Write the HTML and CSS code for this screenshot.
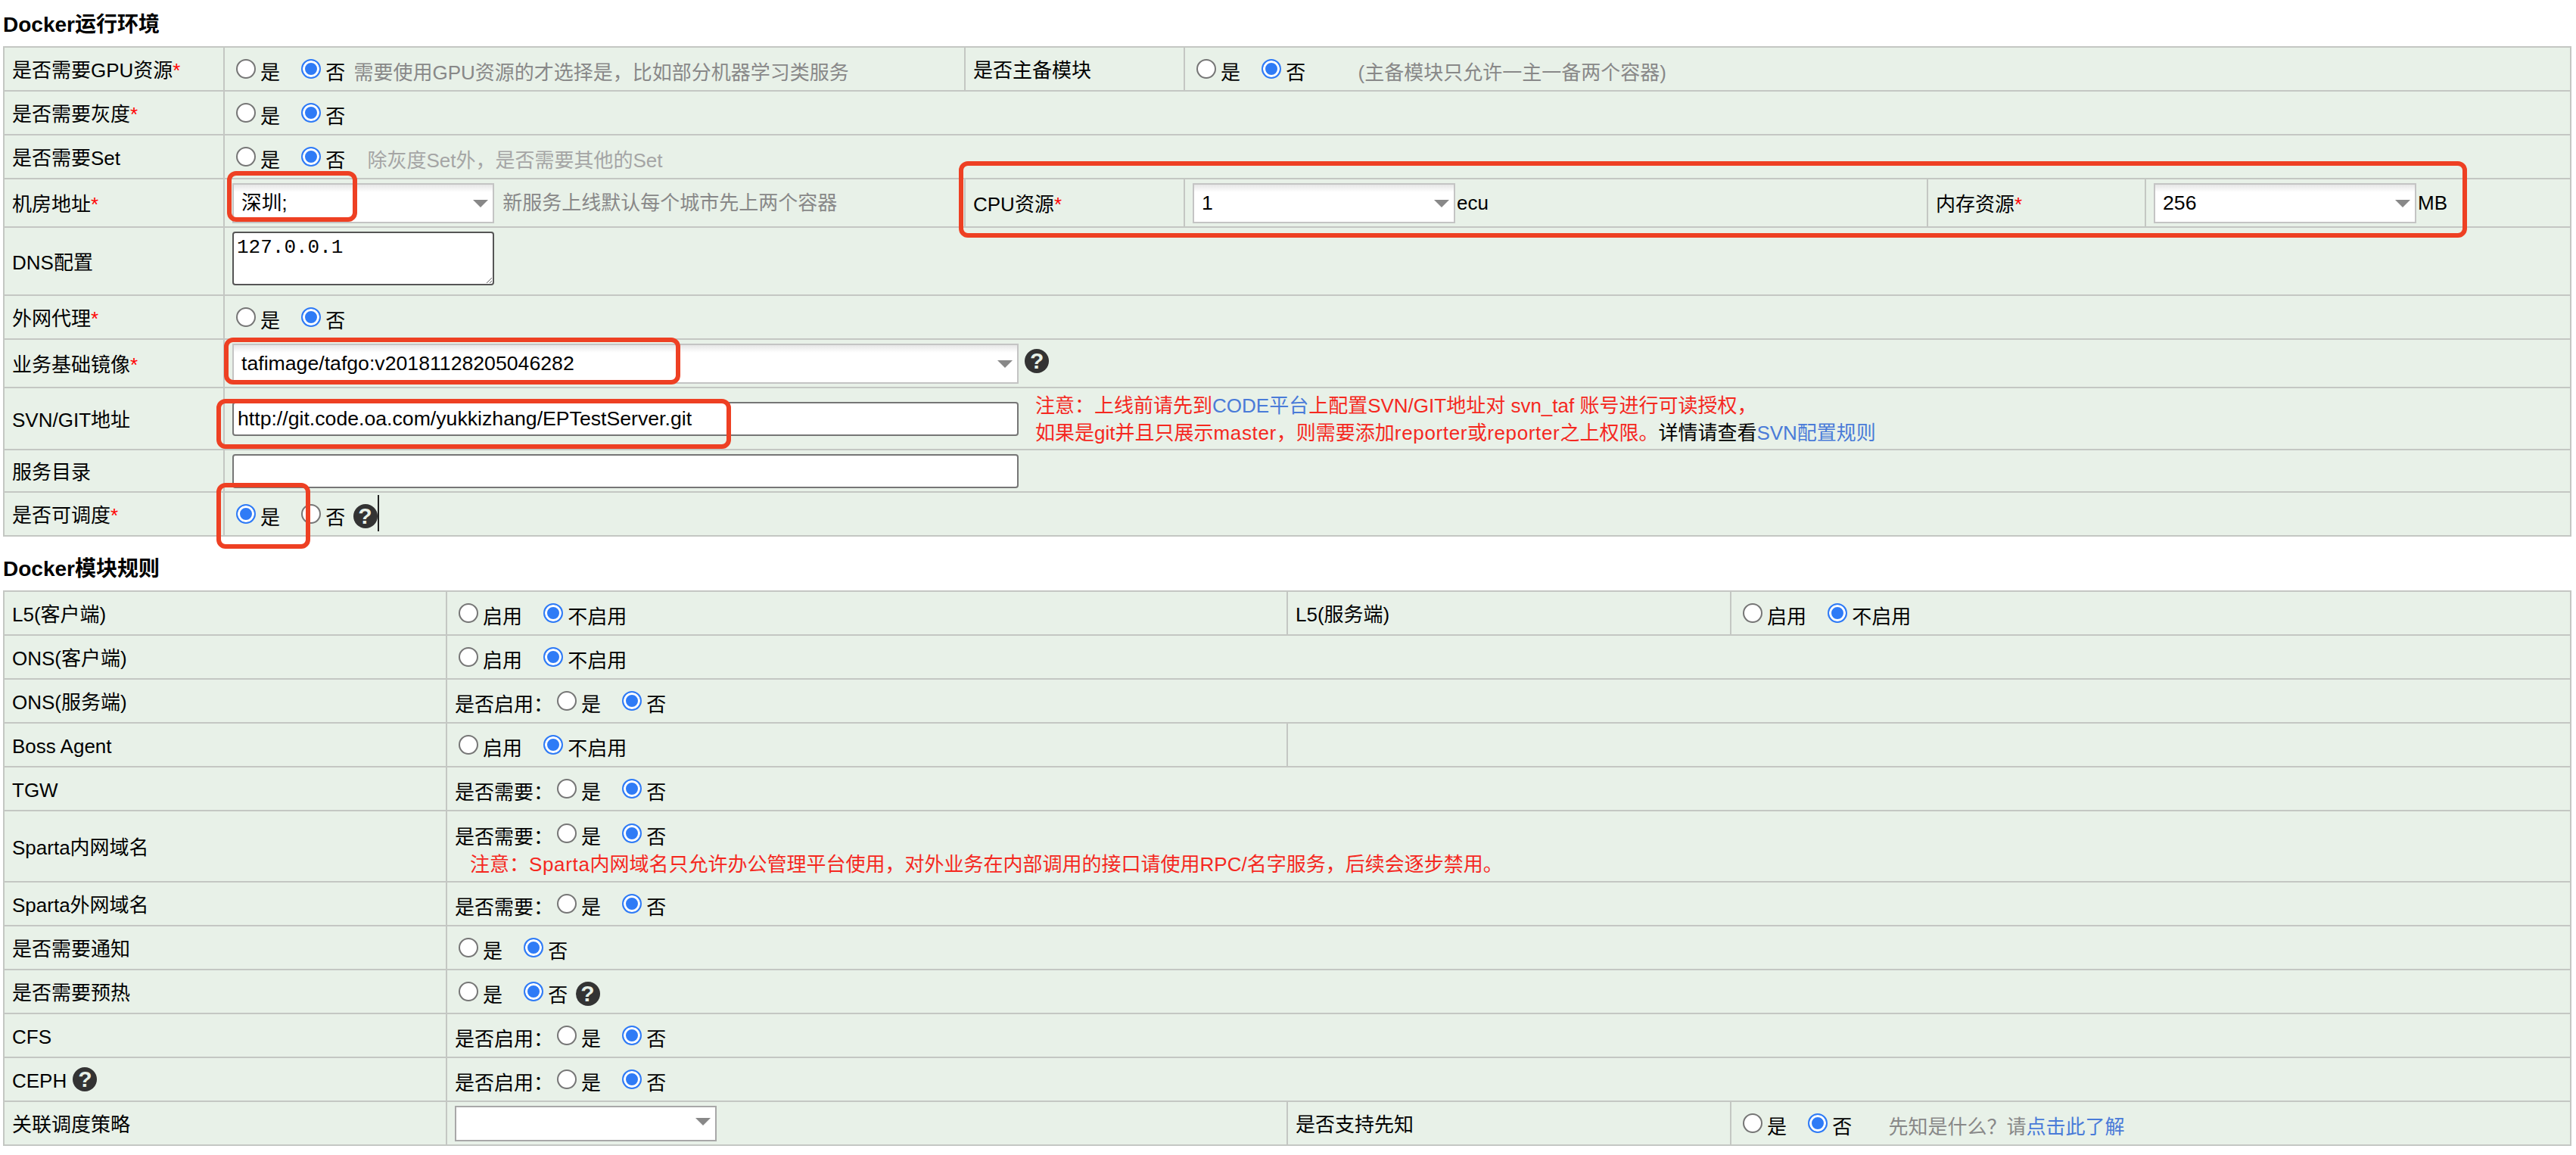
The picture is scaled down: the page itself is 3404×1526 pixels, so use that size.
FILE: index.html
```html
<!DOCTYPE html>
<html lang="zh-CN">
<head>
    <meta charset="UTF-8">
    <title>Docker配置</title>
    <link rel="stylesheet" href="styles.css">
</head>
<body>

    <!-- Docker运行环境 -->
    <h4 class="title">Docker运行环境</h4>
    <table class="form-table env-table">
        <colgroup>
            <col class="env-c1"><col class="env-c2"><col class="env-c3"><col class="env-c4"><col class="env-c5"><col class="env-c6">
        </colgroup>
        <tr>
            <td>是否需要GPU资源<em class="req">*</em></td>
            <td class="opt">
                <input class="radio" type="radio" name="gpu"><label>是</label>
                <input class="radio" type="radio" name="gpu" checked><label class="last">否</label>
                <span class="hint">需要使用GPU资源的才选择是，比如部分机器学习类服务</span>
            </td>
            <td>是否主备模块</td>
            <td class="opt" colspan="3">
                <input class="radio" type="radio" name="master"><label>是</label>
                <input class="radio" type="radio" name="master" checked><label class="last">否</label>
                <span class="hint far">(主备模块只允许一主一备两个容器)</span>
            </td>
        </tr>
        <tr>
            <td>是否需要灰度<em class="req">*</em></td>
            <td class="opt" colspan="5">
                <input class="radio" type="radio" name="gray"><label>是</label>
                <input class="radio" type="radio" name="gray" checked><label class="last">否</label>
            </td>
        </tr>
        <tr>
            <td>是否需要Set</td>
            <td class="opt" colspan="5">
                <input class="radio" type="radio" name="set"><label>是</label>
                <input class="radio" type="radio" name="set" checked><label class="last">否</label>
                <span class="hint light">除灰度Set外，是否需要其他的Set</span>
            </td>
        </tr>
        <tr class="row-select">
            <td>机房地址<em class="req">*</em></td>
            <td class="ctl">
                <span class="dropdown w-city"><select><option>深圳;</option></select></span>
                <span class="hint">新服务上线默认每个城市先上两个容器</span>
            </td>
            <td>CPU资源<em class="req">*</em></td>
            <td class="ctl">
                <span class="dropdown w-small"><select><option>1</option></select></span><span class="unit">ecu</span>
            </td>
            <td>内存资源<em class="req">*</em></td>
            <td class="ctl">
                <span class="dropdown w-small"><select><option>256</option></select></span><span class="unit">MB</span>
            </td>
        </tr>
        <tr class="row-dns">
            <td>DNS配置</td>
            <td class="ctl" colspan="5"><textarea class="dns">127.0.0.1</textarea></td>
        </tr>
        <tr>
            <td>外网代理<em class="req">*</em></td>
            <td class="opt" colspan="5">
                <input class="radio" type="radio" name="proxy"><label>是</label>
                <input class="radio" type="radio" name="proxy" checked><label class="last">否</label>
            </td>
        </tr>
        <tr class="row-select">
            <td>业务基础镜像<em class="req">*</em></td>
            <td class="ctl" colspan="5">
                <span class="dropdown w-wide"><select><option>tafimage/tafgo:v20181128205046282</option></select></span>
                <span class="help">?</span>
            </td>
        </tr>
        <tr class="row-svn">
            <td>SVN/GIT地址</td>
            <td class="ctl" colspan="5">
                <div class="svn-line">
                    <input class="text-input" type="text" value="http://git.code.oa.com/yukkizhang/EPTestServer.git">
                    <p class="note">注意：上线前请先到<a href="#">CODE平台</a>上配置SVN/GIT地址对 svn_taf 账号进行可读授权，<br>如果是git并且只展示<span class="lat">master</span>，则需要添加<span class="lat">reporter</span>或<span class="lat">reporter</span>之上权限。<span class="plain">详情请查看</span><a href="#">SVN配置规则</a></p>
                </div>
            </td>
        </tr>
        <tr class="row-dir">
            <td>服务目录</td>
            <td class="ctl" colspan="5"><input class="text-input" type="text"></td>
        </tr>
        <tr>
            <td>是否可调度<em class="req">*</em></td>
            <td class="opt" colspan="5">
                <input class="radio" type="radio" name="sched" checked><label>是</label>
                <input class="radio" type="radio" name="sched"><label class="last">否</label>
                <span class="help gap">?</span><span class="caret"></span>
            </td>
        </tr>
    </table>

    <!-- Docker模块规则 -->
    <h4 class="title second">Docker模块规则</h4>
    <table class="form-table rule-table">
        <colgroup>
            <col class="rule-c1"><col class="rule-c2"><col class="rule-c3"><col class="rule-c4">
        </colgroup>
        <tr>
            <td>L5(客户端)</td>
            <td class="opt">
                <input class="radio" type="radio" name="l5c"><label>启用</label>
                <input class="radio" type="radio" name="l5c" checked><label>不启用</label>
            </td>
            <td>L5(服务端)</td>
            <td class="opt">
                <input class="radio" type="radio" name="l5s"><label>启用</label>
                <input class="radio" type="radio" name="l5s" checked><label>不启用</label>
            </td>
        </tr>
        <tr>
            <td>ONS(客户端)</td>
            <td class="opt" colspan="3">
                <input class="radio" type="radio" name="onsc"><label>启用</label>
                <input class="radio" type="radio" name="onsc" checked><label>不启用</label>
            </td>
        </tr>
        <tr>
            <td>ONS(服务端)</td>
            <td class="opt" colspan="3">是否启用：<input class="radio" type="radio" name="onss"><label>是</label>
                <input class="radio" type="radio" name="onss" checked><label>否</label>
            </td>
        </tr>
        <tr>
            <td>Boss Agent</td>
            <td class="opt">
                <input class="radio" type="radio" name="boss"><label>启用</label>
                <input class="radio" type="radio" name="boss" checked><label>不启用</label>
            </td>
            <td colspan="2"></td>
        </tr>
        <tr>
            <td>TGW</td>
            <td class="opt" colspan="3">是否需要：<input class="radio" type="radio" name="tgw"><label>是</label>
                <input class="radio" type="radio" name="tgw" checked><label>否</label>
            </td>
        </tr>
        <tr class="row-sparta">
            <td>Sparta内网域名</td>
            <td class="ctl" colspan="3">
                <div class="sparta-line">是否需要：<input class="radio" type="radio" name="spi"><label>是</label>
                    <input class="radio" type="radio" name="spi" checked><label>否</label>
                </div>
                <p class="note sparta-note">注意：<span class="lat">Sparta</span>内网域名只允许办公管理平台使用，对外业务在内部调用的接口请使用RPC/名字服务，后续会逐步禁用。</p>
            </td>
        </tr>
        <tr>
            <td>Sparta外网域名</td>
            <td class="opt" colspan="3">是否需要：<input class="radio" type="radio" name="spo"><label>是</label>
                <input class="radio" type="radio" name="spo" checked><label>否</label>
            </td>
        </tr>
        <tr>
            <td>是否需要通知</td>
            <td class="opt" colspan="3">
                <input class="radio" type="radio" name="notice"><label>是</label>
                <input class="radio" type="radio" name="notice" checked><label>否</label>
            </td>
        </tr>
        <tr>
            <td>是否需要预热</td>
            <td class="opt" colspan="3">
                <input class="radio" type="radio" name="warm"><label>是</label>
                <input class="radio" type="radio" name="warm" checked><label class="last">否</label>
                <span class="help gap">?</span>
            </td>
        </tr>
        <tr>
            <td>CFS</td>
            <td class="opt" colspan="3">是否启用：<input class="radio" type="radio" name="cfs"><label>是</label>
                <input class="radio" type="radio" name="cfs" checked><label>否</label>
            </td>
        </tr>
        <tr>
            <td>CEPH <span class="help">?</span></td>
            <td class="opt" colspan="3">是否启用：<input class="radio" type="radio" name="ceph"><label>是</label>
                <input class="radio" type="radio" name="ceph" checked><label>否</label>
            </td>
        </tr>
        <tr>
            <td>关联调度策略</td>
            <td class="ctl"><span class="dropdown w-city flat"><select><option></option></select></span></td>
            <td>是否支持先知</td>
            <td class="opt">
                <input class="radio" type="radio" name="know"><label>是</label>
                <input class="radio" type="radio" name="know" checked><label class="last">否</label>
                <span class="hint near">先知是什么？请<a href="#">点击此了解</a></span>
            </td>
        </tr>
    </table>

    <!-- 红框标注 -->
    <div class="mark mark-city"></div>
    <div class="mark mark-cpu"></div>
    <div class="mark mark-image"></div>
    <div class="mark mark-svn"></div>
    <div class="mark mark-sched"></div>

</body>
</html>
```

FILE: styles.css
```css
body {
    margin: 0;
    padding: 0 7px 0 4px;
    background: #fff;
    color: #000;
    font-family: "Liberation Sans", "Noto Sans CJK SC", sans-serif;
    font-size: 26px;
}

/* Section titles */
.title {
    margin: 0;
    height: 61px;
    padding-top: 16px;
    box-sizing: border-box;
    font-size: 28px;
    line-height: 34px;
    font-weight: bold;
}

.title.second {
    height: 71px;
    padding-top: 26px;
}

/* Tables */
.form-table {
    width: 3392px;
    table-layout: fixed;
    border-collapse: collapse;
    background: #e8f1e8;
}

.form-table td {
    height: 58px;
    padding: 4px 10px 0;
    border: 2px solid #c4c7c3;
    box-sizing: border-box;
    line-height: 34px;
    white-space: nowrap;
}

/* cells holding radios sit a little lower, cells holding fields don't */
.form-table td.opt { padding-top: 8px; }
.form-table td.ctl { padding-top: 0; }

.env-c1 { width: 291px; }
.env-c2 { width: 979px; }
.env-c3 { width: 290px; }
.env-c4 { width: 982px; }
.env-c5 { width: 288px; }
.env-c6 { width: 562px; }

.rule-c1 { width: 585px; }
.rule-c2 { width: 1111px; }
.rule-c3 { width: 586px; }
.rule-c4 { width: 1110px; }

.form-table .row-select td { height: 64px; }
.form-table .row-dns td { height: 90px; }
.form-table .row-svn td { height: 82px; }
.form-table .row-dir td { height: 56px; }
.form-table .row-sparta td { height: 94px; }

.req {
    color: #f00;
    font-style: normal;
}

/* Radios */
.radio {
    appearance: none;
    display: inline-block;
    width: 26px;
    height: 26px;
    margin: 0 6px 0 5px;
    border: 2px solid #767676;
    border-radius: 50%;
    background: #fff;
    box-sizing: border-box;
    vertical-align: 1px;
}

.radio:checked {
    border: 2px solid #2f7bf6;
    background: #2f7bf6;
    box-shadow: inset 0 0 0 3px #fff;
}

label {
    margin-right: 16px;
}

label.last {
    margin-right: 0;
}

/* Grey helper text */
.hint {
    margin-left: 4px;
    color: #888;
}

.ctl .hint, .unit {
    position: relative;
    top: 2px;
}

.hint.light {
    margin-left: 22px;
    color: #a5a5a5;
}

.hint.far {
    margin-left: 62px;
}

.hint.near {
    margin-left: 41px;
}

.hint a, .note a {
    color: #4a7bd8;
    text-decoration: none;
}

/* Fake select arrow sits on a real select */
.dropdown {
    position: relative;
    display: inline-block;
    vertical-align: middle;
}

.dropdown::after {
    content: "";
    position: absolute;
    top: 22px;
    right: 8px;
    border-top: 10px solid #888;
    border-left: 10px solid transparent;
    border-right: 10px solid transparent;
}

.dropdown select {
    appearance: none;
    display: block;
    width: 100%;
    height: 53px;
    padding: 0 10px;
    border: 2px solid #c4c4c4;
    border-radius: 0;
    background: linear-gradient(#e6e6e6, #fff 10px);
    font: inherit;
    font-size: 26.667px;
    color: #000;
}

.w-city { width: 346px; }
.w-small { width: 347px; }
.w-wide { width: 1039px; }

.flat select {
    height: 47px;
    border-color: #a8a8a8;
    background: #fff;
}

.flat::after {
    top: 16px;
}

.unit {
    margin-left: 2px;
}

/* Text fields */
.text-input {
    display: block;
    width: 1039px;
    height: 45px;
    padding: 0 5px;
    border: 2px solid #767676;
    border-radius: 4px;
    box-sizing: border-box;
    background: #fff;
    font: inherit;
    font-size: 26.667px;
    color: #000;
}

.dns {
    display: block;
    width: 346px;
    height: 71px;
    margin-bottom: 8px;
    padding: 4px 4px;
    border: 2px solid #555;
    border-radius: 4px;
    box-sizing: border-box;
    font-family: "Liberation Mono", monospace;
    font-size: 26px;
    line-height: 30px;
}

.svn-line {
    display: flex;
    align-items: center;
    gap: 22px;
}

.note {
    margin: 1px 0 0;
    color: #f5281f;
    line-height: 36px;
}

.note .plain {
    color: #000;
}

/* lowercase latin runs a bit wider in these notes */
.lat {
    letter-spacing: 0.65px;
}

.sparta-line {
    height: 46px;
    padding-top: 6px;
    box-sizing: border-box;
    line-height: 46px;
}

.sparta-note {
    margin-left: 20px;
}

/* Question mark badge, negative margin keeps the line height alone */
.help {
    display: inline-block;
    width: 32px;
    height: 32px;
    margin: -8px 0 0 1px;
    border-radius: 50%;
    background: #333;
    color: #e8f1e8;
    font-size: 30px;
    font-weight: bold;
    line-height: 32px;
    text-align: center;
    vertical-align: 1px;
}

.help.gap {
    margin-left: 3px;
}

.ctl .help {
    vertical-align: 0;
}

.caret {
    display: inline-block;
    width: 2px;
    height: 48px;
    margin: -18px 0 -4px;
    background: #222;
    vertical-align: -5px;
}

/* Red annotation boxes drawn over the screenshot */
.mark {
    position: absolute;
    box-sizing: border-box;
    border: 6px solid #ee4023;
    border-radius: 12px;
}

.mark-city { left: 300px; top: 226px; width: 172px; height: 67px; }
.mark-cpu { left: 1267px; top: 213px; width: 1993px; height: 101px; }
.mark-image { left: 296px; top: 446px; width: 603px; height: 62px; }
.mark-svn { left: 286px; top: 527px; width: 680px; height: 66px; }
.mark-sched { left: 286px; top: 638px; width: 124px; height: 87px; }
```
